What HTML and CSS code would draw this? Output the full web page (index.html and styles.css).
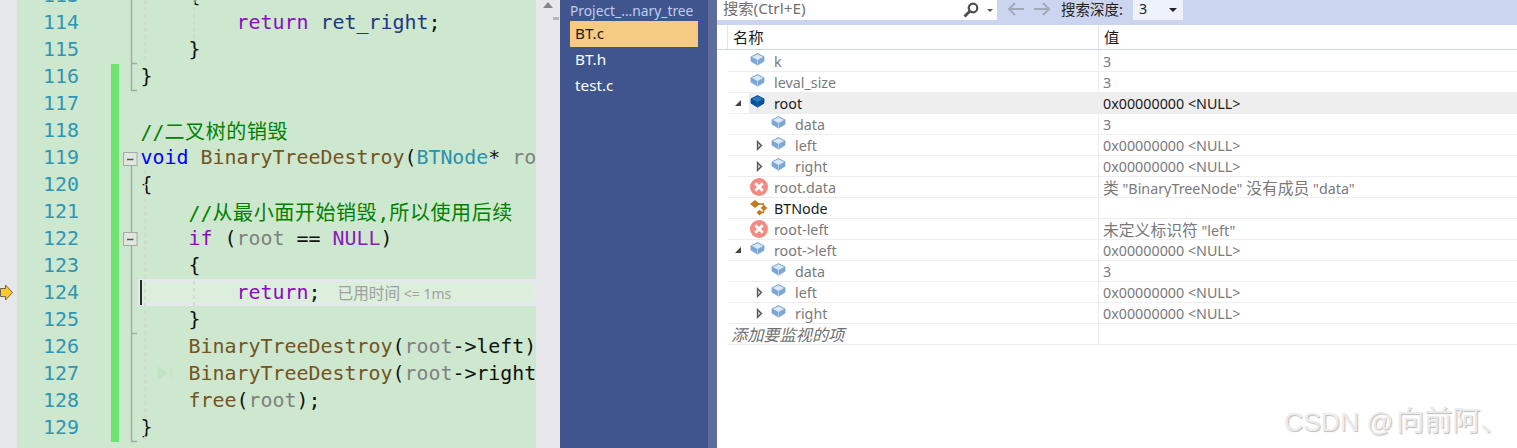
FILE: index.html
```html
<!DOCTYPE html>
<html lang="zh-CN">
<head>
<meta charset="utf-8">
<title>Visual Studio 调试</title>
<link rel="stylesheet" href="styles.css">
</head>
<body>
<svg width="0" height="0" class="defs">
  <symbol id="cube" viewBox="0 0 15 13">
    <path class="cube-body" d="M1 3.800 7.500.5 14 3.800v4.400L7.500 12.200 1 8.200z" stroke-linejoin="round"/>
    <path class="cube-top" d="M1.800 3.900 7.500 1.200l5.700 2.700-5.700 3z"/>
    <path class="cube-edge" d="M7.500 7.200v4.800"/>
  </symbol>
  <symbol id="err" viewBox="0 0 18 18">
    <circle cx="9" cy="9" r="9" fill="#f28b82"/>
    <path d="M5.300 5.300l7.400 7.400M12.700 5.300l-7.400 7.400" stroke="#fff" stroke-width="2.800" fill="none"/>
  </symbol>
  <symbol id="cls" viewBox="0 0 18 17">
    <path d="M5 .5 10 4.500 5 8.500 0 4.500z" fill="#c27a1c"/>
    <path d="M8 4.500h5.500V13H10" fill="none" stroke="#c27a1c" stroke-width="1.500"/>
    <path d="M14 5.800 17.500 8.500 14 11.200l-3.500-2.700zM9.500 10.300l3 2.700-3 3-3-3z" fill="#c27a1c"/>
  </symbol>
  <symbol id="open" viewBox="0 0 8 8"><path d="M7 1v6H1z" fill="#444"/></symbol>
  <symbol id="closed" viewBox="0 0 7 11"><path d="M1.500 1.500 5.500 5.500 1.500 9.500z" fill="#cfcfcf" stroke="#555" stroke-width="1.300"/></symbol>
</svg>

<main class="app">
  <div class="margin">
    <svg class="bp" width="13" height="17" viewBox="0 0 13 17"><path d="M0.500 4.500H5.500V1L12.500 8.500 5.500 16V12.500H0.500z" fill="#ffc62e" stroke="#6b6450" stroke-width="1"/></svg>
  </div>

  <section class="editor">
    <div class="line"><span class="num">113</span><span class="bar"></span><span class="code i2">{</span></div>
    <div class="line"><span class="num">114</span><span class="bar"></span><span class="code i3"><span class="kw">return</span> <span class="var">ret_right</span>;</span></div>
    <div class="line"><span class="num">115</span><span class="bar"></span><span class="code i2">}</span></div>
    <div class="line"><span class="num">116</span><span class="bar on"></span><span class="code">}</span></div>
    <div class="line"><span class="num">117</span><span class="bar on"></span><span class="code"></span></div>
    <div class="line"><span class="num">118</span><span class="bar on"></span><span class="code cm">//<span class="cjk">二叉树的销毁</span></span></div>
    <div class="line"><span class="num">119</span><span class="bar on"></span><span class="code"><span class="ty">void</span> <span class="fn">BinaryTreeDestroy</span>(<span class="cl">BTNode</span>* <span class="pm">root</span>)</span></div>
    <div class="line"><span class="num">120</span><span class="bar on"></span><span class="code">{</span></div>
    <div class="line"><span class="num">121</span><span class="bar on"></span><span class="code i2 cm">//<span class="cjk">从最小面开始销毁</span>,<span class="cjk">所以使用后续</span></span></div>
    <div class="line"><span class="num">122</span><span class="bar on"></span><span class="code i2"><span class="kw">if</span> (<span class="pm">root</span> == <span class="mc">NULL</span>)</span></div>
    <div class="line"><span class="num">123</span><span class="bar on"></span><span class="code i2">{</span></div>
    <div class="line current"><span class="num">124</span><span class="bar on"></span><span class="code i3"><span class="kw">return</span>;<span class="hint"><span class="hint-cjk">已用时间</span> &lt;= 1ms</span></span></div>
    <div class="line"><span class="num">125</span><span class="bar on"></span><span class="code i2">}</span></div>
    <div class="line"><span class="num">126</span><span class="bar on"></span><span class="code i2"><span class="fn">BinaryTreeDestroy</span>(<span class="pm">root</span>-&gt;left);</span></div>
    <div class="line"><span class="num">127</span><span class="bar on"></span><span class="code i2"><span class="fn">BinaryTreeDestroy</span>(<span class="pm">root</span>-&gt;right);</span></div>
    <div class="line"><span class="num">128</span><span class="bar on"></span><span class="code i2"><span class="fn">free</span>(<span class="pm">root</span>);</span></div>
    <div class="line"><span class="num">129</span><span class="bar on"></span><span class="code">}</span></div>

    <svg class="guides" width="519" height="448" viewBox="0 0 519 448">
      <g class="dash">
        <path d="M128 0V62"/><path d="M177 0V40"/>
        <path d="M128 170V440"/><path d="M177 281V307"/>
      </g>
      <g class="outline">
        <path d="M114.500 0V90.500H120M114.500 63.500H120"/>
        <path d="M114.500 166V232M114.500 246V441.500H120M114.500 333.500H120"/>
      </g>
      <g class="fold">
        <rect x="106.500" y="152.500" width="13.500" height="13"/><path d="M110 159.500H116.500"/>
        <rect x="106.500" y="232.500" width="13.500" height="13"/><path d="M110 239.500H116.500"/>
      </g>
      <path class="ghost" d="M141 367l9 6-9 6zM154 367v12"/>
    </svg>
  </section>

  <div class="scroll">
    <span class="scroll-up"></span>
    <span class="scroll-tick"></span>
  </div>

  <nav class="files">
    <div class="files-title">Project_...nary_tree</div>
    <div class="file active">BT.c</div>
    <div class="file">BT.h</div>
    <div class="file">test.c</div>
  </nav>
  <div class="split"></div>

  <section class="watch">
    <div class="toolbar">
      <div class="search">
        <span class="search-text">搜索(Ctrl+E)</span>
        <svg class="mag" width="18" height="16" viewBox="0 0 18 16"><circle cx="11" cy="6" r="4.300" fill="none" stroke="#4d4d4d" stroke-width="2.200"/><path d="M8 9 2.500 14.500" stroke="#4d4d4d" stroke-width="2.800"/></svg>
        <span class="caret small"></span>
      </div>
      <svg class="nav-arrow" width="18" height="14" viewBox="0 0 18 14"><path d="M17 7H2M8 1 2 7l6 6" fill="none" stroke="#a3a9b8" stroke-width="2"/></svg>
      <svg class="nav-arrow second" width="18" height="14" viewBox="0 0 18 14"><path d="M1 7h15M10 1l6 6-6 6" fill="none" stroke="#a3a9b8" stroke-width="2"/></svg>
      <span class="depth-label">搜索深度:</span>
      <div class="combo"><span class="combo-val">3</span><span class="caret"></span></div>
    </div>

    <div class="head">
      <div class="head-name">名称</div>
      <div class="head-value">值</div>
    </div>

    <div class="rows">
      <div class="row"><div class="name"><span class="exp"></span><span class="body"><svg class="ic stale"><use href="#cube"/></svg><span class="label">k</span></span></div><div class="value">3</div></div>
      <div class="row"><div class="name"><span class="exp"></span><span class="body"><svg class="ic stale"><use href="#cube"/></svg><span class="label">leval_size</span></span></div><div class="value">3</div></div>
      <div class="row sel"><div class="name"><span class="exp"><svg class="tw"><use href="#open"/></svg></span><span class="body"><svg class="ic live"><use href="#cube"/></svg><span class="label">root</span></span></div><div class="value">0x00000000 &lt;NULL&gt;</div></div>
      <div class="row"><div class="name"><span class="exp deep"></span><span class="body"><svg class="ic stale"><use href="#cube"/></svg><span class="label">data</span></span></div><div class="value">3</div></div>
      <div class="row"><div class="name"><span class="exp deep"><svg class="tc"><use href="#closed"/></svg></span><span class="body"><svg class="ic stale"><use href="#cube"/></svg><span class="label">left</span></span></div><div class="value">0x00000000 &lt;NULL&gt;</div></div>
      <div class="row"><div class="name"><span class="exp deep"><svg class="tc"><use href="#closed"/></svg></span><span class="body"><svg class="ic stale"><use href="#cube"/></svg><span class="label">right</span></span></div><div class="value">0x00000000 &lt;NULL&gt;</div></div>
      <div class="row"><div class="name"><span class="exp"></span><span class="body"><svg class="ic big"><use href="#err"/></svg><span class="label">root.data</span></span></div><div class="value"><span class="cn">类</span> "BinaryTreeNode" <span class="cn">没有成员</span> "data"</div></div>
      <div class="row strong"><div class="name"><span class="exp"></span><span class="body"><svg class="ic big"><use href="#cls"/></svg><span class="label">BTNode</span></span></div><div class="value"></div></div>
      <div class="row"><div class="name"><span class="exp"></span><span class="body"><svg class="ic big"><use href="#err"/></svg><span class="label">root-left</span></span></div><div class="value"><span class="cn">未定义标识符</span> "left"</div></div>
      <div class="row"><div class="name"><span class="exp"><svg class="tw"><use href="#open"/></svg></span><span class="body"><svg class="ic stale"><use href="#cube"/></svg><span class="label">root-&gt;left</span></span></div><div class="value">0x00000000 &lt;NULL&gt;</div></div>
      <div class="row"><div class="name"><span class="exp deep"></span><span class="body"><svg class="ic stale"><use href="#cube"/></svg><span class="label">data</span></span></div><div class="value">3</div></div>
      <div class="row"><div class="name"><span class="exp deep"><svg class="tc"><use href="#closed"/></svg></span><span class="body"><svg class="ic stale"><use href="#cube"/></svg><span class="label">left</span></span></div><div class="value">0x00000000 &lt;NULL&gt;</div></div>
      <div class="row"><div class="name"><span class="exp deep"><svg class="tc"><use href="#closed"/></svg></span><span class="body"><svg class="ic stale"><use href="#cube"/></svg><span class="label">right</span></span></div><div class="value">0x00000000 &lt;NULL&gt;</div></div>
      <div class="row add"><div class="name">添加要监视的项</div><div class="value"></div></div>
    </div>
    <div class="watermark">CSDN @<span class="wm-cn">向前阿、</span></div>
  </section>
</main>
</body>
</html>
```

FILE: styles.css
```css
* { box-sizing: border-box; }
html, body { margin: 0; height: 448px; overflow: hidden; background: #fff; }
.defs { position: absolute; }

.app {
  display: grid;
  grid-template-columns: 17px 519px 24px 148px 9px 800px;
  height: 448px;
  font-family: "Noto Sans", "Noto Sans CJK SC", sans-serif;
}

/* left breakpoint margin */
.margin { background: #e6e7e8; position: relative; }
.bp { position: absolute; left: 0; top: 284px; }

/* editor */
.editor {
  position: relative;
  overflow: hidden;
  background: #cde8ce;
  font-family: "DejaVu Sans Mono", "Noto Sans CJK SC", monospace;
  font-size: 19.93px;
  color: #111;
}
.line {
  display: flex;
  height: 27px;
  line-height: 27px;
  white-space: pre;
}
.line:first-child { margin-top: -18px; }
.num { width: 62px; text-align: right; color: #2e95b5; flex: none; }
.bar { width: 8px; margin-left: 32px; flex: none; }
.bar.on { background: #6ee36f; margin-top: 1px; margin-bottom: -1px; }
.code { margin-left: 21.500px; flex: none; }
.i2 { margin-left: 69.500px; }
.i3 { margin-left: 117.500px; }
.kw { color: #8f08c4; }
.ty { color: #0000ff; }
.fn { color: #74531f; }
.cl { color: #2b91af; }
.pm { color: #808080; }
.mc { color: #8a1bb8; }
.var { color: #1f377f; }
.cm { color: #008000; }
.cjk { letter-spacing: 0.6px; font-family: "Noto Sans CJK SC", sans-serif; font-size: 20px; }

.current { position: relative; }
.current::before {
  content: "";
  position: absolute;
  left: 121px; right: 0; top: 0; bottom: 0;
  background: #dbefdc;
  border: 3px solid #e5e8ec;
}
.current::after {
  content: "";
  position: absolute;
  left: 123px; top: 1px;
  width: 2px; height: 25px;
  background: #2a2a2a;
}
.current .num, .current .bar, .current .code { position: relative; z-index: 1; }
.hint {
  margin-left: 17px;
  font-family: "Noto Sans", sans-serif;
  font-size: 14px;
  color: #a0a0a0;
}
.hint-cjk { font-family: "Noto Sans CJK SC", sans-serif; font-size: 15.700px; }

.guides { position: absolute; left: 0; top: 0; pointer-events: none; }
.dash path { stroke: #d2d7d2; stroke-width: 1.500; stroke-dasharray: 4 3; fill: none; }
.outline path { stroke: #a5a8a5; stroke-width: 1.400; fill: none; }
.fold rect { fill: #dfe7df; stroke: #a5a8a5; }
.fold path { stroke: #555; stroke-width: 1.500; }
.ghost { fill: #c3e2c5; stroke: #c3e2c5; }

/* scroll strip */
.scroll { background: #e7e7ec; position: relative; }
.scroll-up {
  position: absolute; left: 7px; top: 2px;
  border-left: 5px solid transparent;
  border-right: 5px solid transparent;
  border-bottom: 6px solid #85858f;
}
.scroll-tick { position: absolute; left: 17px; top: 17px; width: 6px; height: 3px; background: #b5b5bb; }

/* file list */
.files { background: #40558e; padding: 0 10px; font-size: 15.300px; }
.files-title { height: 21px; line-height: 21px; color: #bfcdf0; font-size: 13.800px; white-space: nowrap; }
.file { height: 26px; line-height: 25px; color: #fff; padding-left: 5px; }
.file.active { background: #f5cb81; color: #1a1a1a; }
.split { background: #5d6c9b; }

/* watch window */
.watch { position: relative; background: #fff; color: #7a7a7a; font-size: 14.300px; }
.toolbar {
  display: flex;
  align-items: flex-start;
  height: 25px;
  background: #ccd5f0;
}
.search {
  display: flex;
  align-items: center;
  width: 280px;
  height: 20px;
  background: #fff;
  padding-left: 6px;
  color: #717171;
  font-size: 15.300px;
}
.search-text { flex: 1; line-height: 16px; margin-top: -4px; }
.mag { margin-right: 7px; }
.caret {
  display: inline-block;
  border-left: 4px solid transparent;
  border-right: 4px solid transparent;
  border-top: 4px solid #222;
}
.caret.small { margin-right: 4px; border-left-width: 3px; border-right-width: 3px; border-top: 3px solid #555; }
.nav-arrow { margin: 2px 0 0 10px; flex: none; }
.nav-arrow.second { margin-left: 8px; }
.depth-label { margin-left: 10px; color: #222; font-size: 14.500px; line-height: 18px; white-space: nowrap; }
.combo {
  display: flex;
  align-items: center;
  justify-content: space-between;
  width: 50px;
  height: 20px;
  margin-left: 10px;
  padding: 0 6px;
  background: #eef2fc;
  color: #222;
}
.combo-val { line-height: 16px; margin-top: -3px; }
.head {
  display: grid;
  grid-template-columns: 381px 1fr;
  height: 25px;
  line-height: 24px;
  border-bottom: 1px solid #ccd5f0;
  color: #1a1a1a;
  font-size: 15.300px;
}
.head-name { padding-left: 16px; position: relative; }
.head-name::before { content: ""; position: absolute; left: 10px; top: 0; bottom: 0; width: 1px; background: #e5e5e5; }
.head-value { border-left: 1px solid #e0e4f0; padding-left: 5px; }
.rows { margin: 1px 0 0 11px; }
.row {
  display: grid;
  grid-template-columns: 370px 1fr;
  height: 21px;
  line-height: 22px;
  border-bottom: 1px solid #eeeeee;
}
.name { display: flex; min-width: 0; }
.value { border-left: 1px solid #eeeeee; padding-left: 4px; white-space: nowrap; overflow: hidden; }
.cn { font-size: 15.800px; }
.exp { width: 21px; flex: none; display: flex; align-items: center; }
.exp.deep { width: 42px; }
.body { flex: 1; display: flex; align-items: center; padding-left: 1px; gap: 9px; }
.label { height: 20px; }
.ic { width: 15px; height: 13px; flex: none; margin-top: -3px; }
.ic.big { width: 18px; height: 18px; margin: 0 -3px 0 0; }
.tw { width: 8px; height: 8px; margin-left: 6px; }
.tc { width: 7px; height: 11px; margin-left: 28px; }
.cube-body { fill: var(--cube, #7ca7d4); stroke: var(--cube, #7ca7d4); stroke-width: 0.800; }
.cube-top { fill: var(--cube-top, #dbe7f4); }
.cube-edge { stroke: var(--cube-top, #dbe7f4); fill: none; stroke-width: 0.600; }
.live { --cube: #00539c; --cube-top: #2f78bd; }
.sel .body, .sel .value { background: #eeeeee; color: #1a1a1a; }
.strong .label { color: #1a1a1a; }
.add .name { padding-left: 3px; font-style: italic; color: #6f6f6f; font-size: 16.200px; }
.watermark {
  position: absolute;
  left: 567px;
  top: 402px;
  font-family: "Liberation Sans", "Noto Sans CJK SC", sans-serif;
  font-size: 26.500px;
  line-height: 34px;
  color: #ececec;
  text-shadow: 1px 1px 1px #bdbdbd;
  white-space: nowrap;
}
.wm-cn { font-family: "Noto Sans CJK SC", sans-serif; font-size: 28px; margin-left: 3px; }
```
